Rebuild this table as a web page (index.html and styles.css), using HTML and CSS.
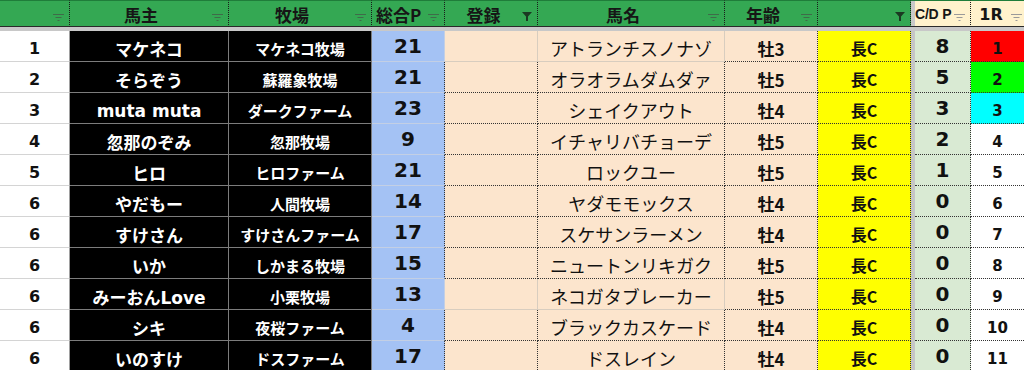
FILE: index.html
```html
<!DOCTYPE html>
<html lang="ja">
<head>
<meta charset="utf-8">
<title>馬主一覧</title>
<link rel="stylesheet" href="styles.css">
</head>
<body>
<div class="sheet">
  <div class="row head">
    <div class="h"><span class="lbl"></span><svg class="fi" width="11" height="8" viewBox="0 0 11 8"><path d="M0 1.5h11M2.5 4.5h6M4.5 7.5h2"/></svg></div>
    <div class="h"><span class="lbl">馬主</span><svg class="fi" width="11" height="8" viewBox="0 0 11 8"><path d="M0 1.5h11M2.5 4.5h6M4.5 7.5h2"/></svg></div>
    <div class="h"><span class="lbl">牧場</span><svg class="fi" width="11" height="8" viewBox="0 0 11 8"><path d="M0 1.5h11M2.5 4.5h6M4.5 7.5h2"/></svg></div>
    <div class="h tight"><span class="lbl">総合P</span><svg class="fi" width="11" height="8" viewBox="0 0 11 8"><path d="M0 1.5h11M2.5 4.5h6M4.5 7.5h2"/></svg></div>
    <div class="h"><span class="lbl">登録</span><svg class="ff" width="10" height="9" viewBox="0 0 10 9"><path d="M0 0h10L6 4.5V9H4V4.5z"/></svg></div>
    <div class="h"><span class="lbl">馬名</span><svg class="fi" width="11" height="8" viewBox="0 0 11 8"><path d="M0 1.5h11M2.5 4.5h6M4.5 7.5h2"/></svg></div>
    <div class="h"><span class="lbl">年齢</span><svg class="fi" width="11" height="8" viewBox="0 0 11 8"><path d="M0 1.5h11M2.5 4.5h6M4.5 7.5h2"/></svg></div>
    <div class="h"><span class="lbl"></span><svg class="ff" width="10" height="9" viewBox="0 0 10 9"><path d="M0 0h10L6 4.5V9H4V4.5z"/></svg></div>
    <div class="hdv"></div>
    <div class="h cream cdh"><span class="lbl">C/D P</span><svg class="fi" width="11" height="8" viewBox="0 0 11 8"><path d="M0 1.5h11M2.5 4.5h6M4.5 7.5h2"/></svg></div>
    <div class="h cream last"><span class="lbl">1R</span><svg class="fi" width="11" height="8" viewBox="0 0 11 8"><path d="M0 1.5h11M2.5 4.5h6M4.5 7.5h2"/></svg></div>
  </div>
  <div class="band"></div>

  <div class="row">
    <div class="c rk">1</div><div class="c ow">マケネコ</div><div class="c fm">マケネコ牧場</div><div class="c pt">21</div><div class="c rg"></div><div class="c hn">アトランチスノナゾ</div><div class="c ag">牡3</div><div class="c ds">長C</div><div class="dv"></div><div class="c cd">8</div><div class="c r1 red">1</div>
  </div>
  <div class="row dot">
    <div class="c rk">2</div><div class="c ow">そらぞう</div><div class="c fm">蘇羅象牧場</div><div class="c pt">21</div><div class="c rg"></div><div class="c hn">オラオラムダムダァ</div><div class="c ag">牡5</div><div class="c ds">長C</div><div class="dv"></div><div class="c cd">5</div><div class="c r1 grn">2</div>
  </div>
  <div class="row dot">
    <div class="c rk">3</div><div class="c ow">muta muta</div><div class="c fm">ダークファーム</div><div class="c pt">23</div><div class="c rg"></div><div class="c hn">シェイクアウト</div><div class="c ag">牡4</div><div class="c ds">長C</div><div class="dv"></div><div class="c cd">3</div><div class="c r1 cyn">3</div>
  </div>
  <div class="row dot">
    <div class="c rk">4</div><div class="c ow">忽那のぞみ</div><div class="c fm">忽那牧場</div><div class="c pt">9</div><div class="c rg"></div><div class="c hn">イチャリバチョーデ</div><div class="c ag">牡5</div><div class="c ds">長C</div><div class="dv"></div><div class="c cd">2</div><div class="c r1">4</div>
  </div>
  <div class="row dot">
    <div class="c rk">5</div><div class="c ow">ヒロ</div><div class="c fm">ヒロファーム</div><div class="c pt">21</div><div class="c rg"></div><div class="c hn">ロックユー</div><div class="c ag">牡5</div><div class="c ds">長C</div><div class="dv"></div><div class="c cd">1</div><div class="c r1">5</div>
  </div>
  <div class="row dot">
    <div class="c rk">6</div><div class="c ow">やだもー</div><div class="c fm">人間牧場</div><div class="c pt">14</div><div class="c rg"></div><div class="c hn">ヤダモモックス</div><div class="c ag">牡4</div><div class="c ds">長C</div><div class="dv"></div><div class="c cd">0</div><div class="c r1">6</div>
  </div>
  <div class="row dot">
    <div class="c rk">6</div><div class="c ow">すけさん</div><div class="c fm">すけさんファーム</div><div class="c pt">17</div><div class="c rg"></div><div class="c hn">スケサンラーメン</div><div class="c ag">牡4</div><div class="c ds">長C</div><div class="dv"></div><div class="c cd">0</div><div class="c r1">7</div>
  </div>
  <div class="row dot">
    <div class="c rk">6</div><div class="c ow">いか</div><div class="c fm">しかまる牧場</div><div class="c pt">15</div><div class="c rg"></div><div class="c hn">ニュートンリキガク</div><div class="c ag">牡5</div><div class="c ds">長C</div><div class="dv"></div><div class="c cd">0</div><div class="c r1">8</div>
  </div>
  <div class="row">
    <div class="c rk">6</div><div class="c ow">みーおんLove</div><div class="c fm">小栗牧場</div><div class="c pt">13</div><div class="c rg"></div><div class="c hn">ネコガタブレーカー</div><div class="c ag">牡5</div><div class="c ds">長C</div><div class="dv"></div><div class="c cd">0</div><div class="c r1">9</div>
  </div>
  <div class="row dot">
    <div class="c rk">6</div><div class="c ow">シキ</div><div class="c fm">夜桜ファーム</div><div class="c pt">4</div><div class="c rg"></div><div class="c hn">ブラックカスケード</div><div class="c ag">牡4</div><div class="c ds">長C</div><div class="dv"></div><div class="c cd">0</div><div class="c r1">10</div>
  </div>
  <div class="row dot">
    <div class="c rk">6</div><div class="c ow">いのすけ</div><div class="c fm">ドスファーム</div><div class="c pt">17</div><div class="c rg"></div><div class="c hn">ドスレイン</div><div class="c ag">牡4</div><div class="c ds">長C</div><div class="dv"></div><div class="c cd">0</div><div class="c r1">11</div>
  </div>
</div>
</body>
</html>
```

FILE: styles.css
```css
* { box-sizing: border-box; margin: 0; padding: 0; }
html, body { background: #ffffff; }
body {
  width: 1024px;
  height: 370px;
  overflow: hidden;
  font-family: "DejaVu Sans", "Noto Sans CJK JP", sans-serif;
  color: #111111;
}
.sheet {
  display: grid;
  grid-template-columns: 70px 159px 143px 73px 93px 187px 93px 93px 4px 56px 53px;
  grid-template-rows: 27px 4px repeat(11, 31px);
}
.row { display: contents; }

/* header */
.h {
  display: flex;
  align-items: center;
  background: #34a853;
  border-top: 1px solid #1f7d3a;
  border-bottom: 1px solid #2a2a2a;
  border-right: 1px dotted #1a1a1a;
  font-family: "Noto Sans CJK JP", sans-serif;
  font-weight: bold;
  font-size: 17px;
  color: #161616;
  padding-right: 5px;
}
.h .lbl {
  flex: 1;
  text-align: center;
  padding-top: 1px;
  white-space: nowrap;
}
.h.tight .lbl { text-align: left; padding-left: 4px; }
.h .fi { flex: none; margin-top: 7px; }
.h .fi path { stroke: #3f6b49; stroke-width: 1; fill: none; }
.h .ff { flex: none; margin-top: 6px; }
.h .ff path { fill: #1b3a22; }
.h.cream { background: #fff2cc; }
.h.cream .fi path { stroke: #9a9a9a; }
.h.cdh .lbl {
  text-align: left;
  font-family: "Liberation Sans", sans-serif;
  font-size: 14px;
  letter-spacing: -0.2px;
}
.h.last { border-right: none; padding-right: 2px; }
.h.last .lbl { font-family: "DejaVu Sans", sans-serif; font-size: 16px; }
.hdv {
  background: #c9c9c9;
  border-top: 1px solid #1f7d3a;
  border-bottom: 1px solid #2a2a2a;
}
.band {
  grid-column: 1 / -1;
  background: #c8c8c8;
}

/* body cells */
.c {
  display: flex;
  align-items: center;
  justify-content: center;
  white-space: nowrap;
  font-weight: bold;
  border-bottom: 1px solid #d4d4d4;
}
.rk {
  background: #ffffff;
  font-size: 16px;
  padding-top: 5px;
  border-right: 1px solid #a0a0a0;
  color: #111;
}
.ow, .fm {
  background: #000000;
  color: #ffffff;
  border-right: 1px solid #7c7c7c;
  border-bottom-color: #7c7c7c;
  padding-top: 5px;
}
.ow { font-size: 17px; }
.fm { font-size: 15px; }
.pt {
  background: #a4c2f4;
  font-size: 20px;
  border-bottom-color: #c3cfe4;
  border-right: 1px solid #c3cfe4;
}
.rg, .hn {
  background: #fce5cd;
  border-bottom: 1px solid #d8cdbf;
  border-right: 1px solid #d8cdbf;
}
.hn {
  font-family: "Noto Sans CJK JP", sans-serif;
  font-weight: normal;
  font-size: 18px;
  padding-top: 4px;
  color: #111;
}
.dot .pt { border-right: 1px dotted #333333; }
.dot .rg, .dot .hn {
  border-bottom: 1px dotted #333333;
  border-right: 1px dotted #333333;
}
.ag {
  background: #fce5cd;
  font-family: "Noto Sans CJK JP", sans-serif;
  font-size: 17px;
  padding-top: 4px;
  border-bottom: 1px dotted #333333;
  border-right: 1px dotted #333333;
}
.ds {
  background: #ffff00;
  font-family: "Noto Sans CJK JP", sans-serif;
  font-size: 16px;
  padding-top: 3px;
  border-bottom: 1px dotted #333333;
  border-right: 1px dotted #333333;
}
.dv { background: #c6c6c6; }
.cd {
  background: #d9ead3;
  font-size: 20px;
  border-bottom: 1px dotted #333333;
  border-right: 1px dotted #333333;
}
.r1 {
  background: #ffffff;
  font-size: 15px;
  padding-top: 6px;
  border-bottom: 1px dotted #333333;
}
.r1.red { background: #ff0000; }
.r1.grn { background: #00ff00; }
.r1.cyn { background: #00ffff; }
```
